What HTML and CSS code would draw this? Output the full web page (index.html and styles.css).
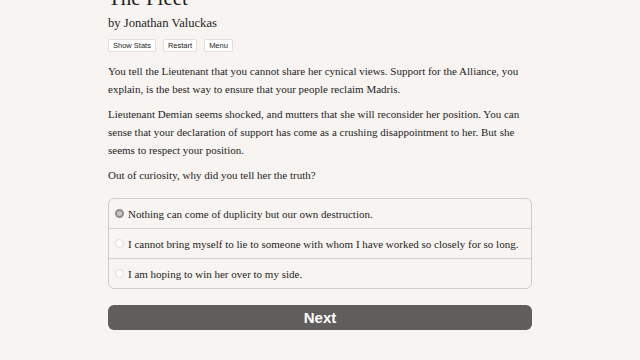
FILE: index.html
```html
<!DOCTYPE html>
<html lang="en">
<head>
    <meta charset="UTF-8">
    <title>The Fleet</title>
    <link rel="stylesheet" href="styles.css">
</head>
<body>
    <div class="container">
        <div class="header">
            <h1>The Fleet</h1>
            <h2>by Jonathan Valuckas</h2>
            <div class="buttons">
                <button class="small-btn">Show Stats</button>
                <button class="small-btn">Restart</button>
                <button class="small-btn">Menu</button>
            </div>
        </div>

        <div class="text">
            <p>You tell the Lieutenant that you cannot share her cynical views. Support for the Alliance, you explain, is the best way to ensure that your people reclaim Madris.</p>
            <p>Lieutenant Demian seems shocked, and mutters that she will reconsider her position. You can sense that your declaration of support has come as a crushing disappointment to her. But she seems to respect your position.</p>
            <p>Out of curiosity, why did you tell her the truth?</p>
        </div>

        <div class="choice">
            <label class="option selected"><span class="radio"></span>Nothing can come of duplicity but our own destruction.</label>
            <label class="option"><span class="radio"></span>I cannot bring myself to lie to someone with whom I have worked so closely for so long.</label>
            <label class="option"><span class="radio"></span>I am hoping to win her over to my side.</label>
        </div>

        <button class="next-btn">Next</button>
    </div>
</body>
</html>
```

FILE: styles.css
```css
body {
    margin: 0;
    background-color: #f7f4f1;
    color: #1e1e1e;
    font-family: "Liberation Serif", "DejaVu Serif", serif;
}

.container {
    width: 424px;
    margin: -14px auto 0;
}

h1 {
    font-size: 21px;
    font-weight: normal;
    margin: 0;
    line-height: 24px;
}

h2 {
    font-size: 12.6px;
    font-weight: normal;
    margin: 4px 0 0;
    line-height: 18px;
}

.buttons {
    display: flex;
    gap: 7px;
    margin-top: 7px;
}

.small-btn {
    font-family: "Liberation Sans", Arial, sans-serif;
    font-size: 7.5px;
    background-color: #fff;
    border: 1px solid #e2dfdb;
    border-radius: 2px;
    padding: 1px 4px;
    line-height: 9px;
    color: #222;
}

.text {
    margin-top: 10px;
    font-size: 11px;
    line-height: 18px;
}

.text p {
    margin: 0 0 7px;
}

.choice {
    margin-top: 14px;
    border: 1px solid #cfcbc7;
    border-radius: 6px;
}

.option {
    display: flex;
    align-items: center;
    height: 29px;
    padding-left: 6px;
    font-size: 11px;
    border-top: 1px solid #d6d2ce;
}

.option:first-child {
    border-top: none;
}

.radio {
    width: 7px;
    height: 7px;
    border-radius: 50%;
    border: 1px solid #e0ddd9;
    background-color: #fff;
    margin-right: 4px;
}

.option.selected .radio {
    background-color: #c9c6c3;
    border: 2px solid #8f8c89;
    width: 5px;
    height: 5px;
}

.next-btn {
    display: block;
    width: 100%;
    margin-top: 16px;
    height: 25px;
    background-color: #5f5e5c;
    color: #fff;
    border: none;
    border-radius: 6px;
    font-family: "Liberation Sans", Arial, sans-serif;
    font-weight: bold;
    font-size: 15px;
    box-shadow: 0 2px 2px #fff;
}
```
